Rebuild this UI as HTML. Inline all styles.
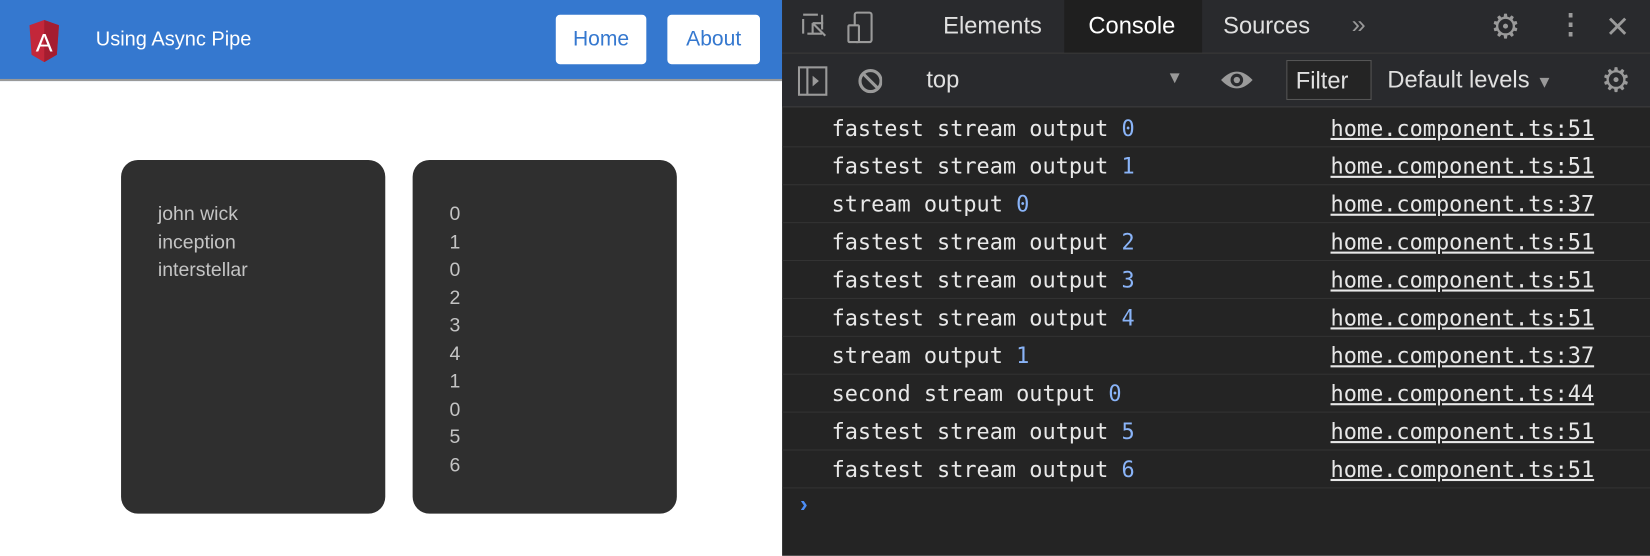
<!DOCTYPE html><html><head><style>
body{margin:0;width:1650px;height:555px;overflow:hidden;background:#fff;font-family:"Liberation Sans",sans-serif;position:relative}
#w{position:absolute;left:0;top:0;width:1568px;height:528px;transform:scale(1.05263);transform-origin:0 0}
.abs{position:absolute}
.hdr{left:0;top:0;width:743px;height:75px;background:#3578cf;border-bottom:2px solid #999}
.btn{top:14px;height:47px;background:#fff;border-radius:4px;color:#3578cf;font-size:20px;line-height:47px;text-align:center}
.card{top:152px;width:251px;height:336px;background:#2f2f2f;border-radius:16px;color:#c4c4c4;font-size:18.5px;line-height:26.5px;box-sizing:border-box;padding:38px 0 0 35px}
.dt{left:743px;top:0;width:825px;height:528px;background:#242424}
.tb{left:743px;width:825px;background:#292a2d;border-bottom:1px solid #3d3d3d}
.row{left:743px;width:825px;height:35px;border-bottom:1px solid #333;font-family:"DejaVu Sans Mono","Liberation Mono",monospace;font-size:20.8px;color:#e8e8e8;line-height:36px}
.row .m{position:absolute;left:47px}
.row .m b{font-weight:normal;color:#8ab4f8}
.row .l{position:absolute;left:521px;text-decoration:underline}
.t{color:#e0e0e0;font-size:22.5px}
</style></head><body><div id="w">
<div class="abs hdr"></div>
<svg class="abs" style="left:27px;top:19px" width="30" height="40" viewBox="0 0 30 40"><path d="M15 0L29 5L27 33L15 40L3 33L1 5Z" fill="#c3273a"/><path d="M15 0L29 5L27 33L15 40Z" fill="#a51d30"/><text x="15" y="30" fill="#fff" font-size="24" text-anchor="middle" font-family="Liberation Sans">A</text></svg>
<div class="abs" style="left:91px;top:27px;color:#fff;font-size:19px">Using Async Pipe</div>
<div class="abs btn" style="left:528px;width:86px">Home</div>
<div class="abs btn" style="left:634px;width:88px">About</div>
<div class="abs card" style="left:115px">john wick<br>inception<br>interstellar</div>
<div class="abs card" style="left:392px">0<br>1<br>0<br>2<br>3<br>4<br>1<br>0<br>5<br>6</div>
<div class="abs dt"></div>
<div class="abs tb" style="top:0;height:50px"></div>
<div class="abs" style="left:1011px;top:0;width:131px;height:50px;background:#1f1f1f"></div>
<svg class="abs" style="left:760px;top:10px" width="90" height="32"><rect x="3" y="4" width="18" height="18" fill="none" stroke="#9a9a9a" stroke-width="2" stroke-dasharray="14 4"/><path d="M12 12l12 12M12 12v10M12 12h10" stroke="#9a9a9a" stroke-width="2"/><rect x="52" y="2" width="16" height="28" rx="2" fill="none" stroke="#9a9a9a" stroke-width="2"/><rect x="46" y="14" width="10" height="16" rx="1" fill="#292a2d" stroke="#9a9a9a" stroke-width="2"/></svg>
<div class="abs t" style="left:896px;top:12px">Elements</div>
<div class="abs t" style="left:1034px;top:12px;color:#fff">Console</div>
<div class="abs t" style="left:1162px;top:12px">Sources</div>
<div class="abs" style="left:1284px;top:10px;color:#999;font-size:24px">»</div>
<div class="abs" style="left:1416px;top:6px;color:#9a9a9a;font-size:32px">⚙</div>
<div class="abs" style="left:1479px;top:8px;color:#9a9a9a;font-size:26px;font-weight:bold">⋮</div>
<div class="abs" style="left:1525px;top:9px;color:#9a9a9a;font-size:28px">✕</div>
<div class="abs tb" style="top:51px;height:50px"></div>
<svg class="abs" style="left:758px;top:62px" width="80" height="30"><rect x="1" y="2" width="26" height="26" fill="none" stroke="#9a9a9a" stroke-width="2"/><path d="M9 2v26" stroke="#9a9a9a" stroke-width="2"/><path d="M14 10l6 5l-6 5z" fill="#9a9a9a"/><circle cx="69" cy="15" r="10" fill="none" stroke="#9a9a9a" stroke-width="3"/><path d="M62 8l14 14" stroke="#9a9a9a" stroke-width="3"/></svg>
<div class="abs t" style="left:880px;top:63px">top</div>
<div class="abs" style="left:1108px;top:66px;color:#999;font-size:16px">▼</div>
<svg class="abs" style="left:1158px;top:64px" width="34" height="24"><path d="M2 12Q17 -4 32 12Q17 28 2 12Z" fill="#9a9a9a"/><circle cx="17" cy="12" r="6" fill="#292a2d"/><circle cx="17" cy="12" r="3" fill="#9a9a9a"/></svg>
<div class="abs" style="left:1222px;top:57px;width:79px;height:36px;border:1px solid #555;background:#242424"></div>
<div class="abs t" style="left:1231px;top:64px">Filter</div>
<div class="abs t" style="left:1318px;top:63px">Default levels <span style="color:#999;font-size:16px">▼</span></div>
<div class="abs" style="left:1521px;top:57px;color:#9a9a9a;font-size:32px">⚙</div>
<div class="abs row" style="top:104px"><span class="m">fastest stream output <b>0</b></span><span class="l">home.component.ts:51</span></div>
<div class="abs row" style="top:140px"><span class="m">fastest stream output <b>1</b></span><span class="l">home.component.ts:51</span></div>
<div class="abs row" style="top:176px"><span class="m">stream output <b>0</b></span><span class="l">home.component.ts:37</span></div>
<div class="abs row" style="top:212px"><span class="m">fastest stream output <b>2</b></span><span class="l">home.component.ts:51</span></div>
<div class="abs row" style="top:248px"><span class="m">fastest stream output <b>3</b></span><span class="l">home.component.ts:51</span></div>
<div class="abs row" style="top:284px"><span class="m">fastest stream output <b>4</b></span><span class="l">home.component.ts:51</span></div>
<div class="abs row" style="top:320px"><span class="m">stream output <b>1</b></span><span class="l">home.component.ts:37</span></div>
<div class="abs row" style="top:356px"><span class="m">second stream output <b>0</b></span><span class="l">home.component.ts:44</span></div>
<div class="abs row" style="top:392px"><span class="m">fastest stream output <b>5</b></span><span class="l">home.component.ts:51</span></div>
<div class="abs row" style="top:428px"><span class="m">fastest stream output <b>6</b></span><span class="l">home.component.ts:51</span></div>
<div class="abs" style="left:760px;top:466px;color:#4c8df6;font-size:22px;font-weight:bold">›</div>
</div></body></html>
